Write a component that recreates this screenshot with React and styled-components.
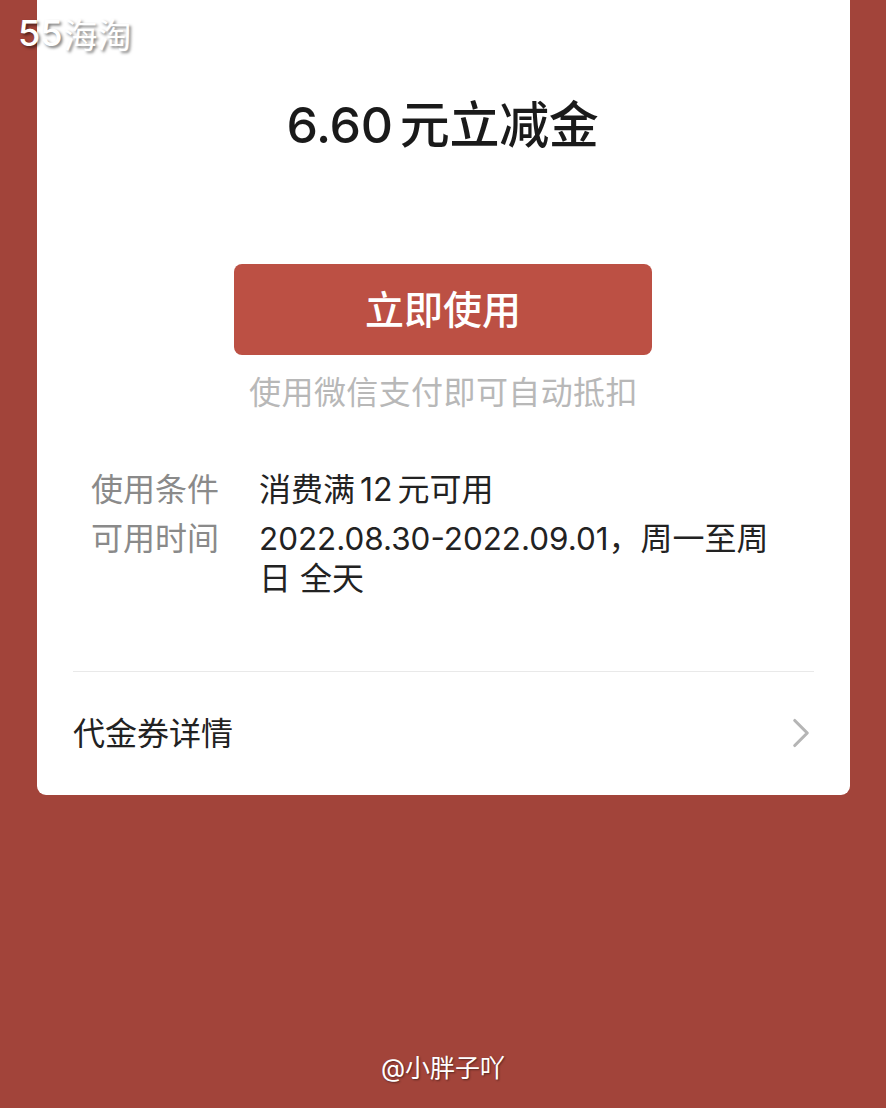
import React from 'react';
import styled, { createGlobalStyle } from 'styled-components';
import { ChevronRight } from 'lucide-react';

const GlobalStyle = createGlobalStyle`
    html, body {
        margin: 0;
        padding: 0;
        background-color: #a2443a;
    }
    body {
        font-family: Inter, "Noto Sans CJK SC", "Noto Sans", sans-serif;
    }
`;

const Page = styled.div`
    width: 886px;
    height: 1108px;
    position: relative;
    overflow: hidden;
    display: flex;
    flex-direction: column;
    align-items: center;
    background-color: #a2443a;
`;

const Watermark = styled.div`
    position: absolute;
    top: 10px;
    left: 18px;
    display: flex;
    align-items: center;
    height: 46px;
    font-size: 34px;
    color: #fff;
    text-shadow: 2px 2px 3px rgba(0, 0, 0, 0.5);
`;

const WatermarkDigits = styled.span`
    font-size: 36px;
    font-weight: 500;
    margin-right: 1px;
`;

const Card = styled.div`
    width: 813px;
    height: 795px;
    margin-left: 1px;
    box-sizing: border-box;
    padding: 92px 36px 0;
    background-color: #fff;
    border-radius: 0 0 9px 9px;
    display: flex;
    flex-direction: column;
    flex-shrink: 0;
`;

const Title = styled.h1`
    margin: 0;
    padding-right: 2px;
    text-align: center;
    font-size: 50px;
    line-height: 66px;
    font-weight: 500;
    letter-spacing: -0.3px;
    word-spacing: -6px;
    color: #1a1a1a;
`;

const UseButton = styled.div`
    width: 418px;
    height: 91px;
    margin: 106px 0 0 161px;
    padding-bottom: 5px;
    box-sizing: border-box;
    background-color: #bc5044;
    border-radius: 8px;
    color: #fff;
    font-size: 39px;
    font-weight: 500;
    display: flex;
    align-items: center;
    justify-content: center;
`;

const Hint = styled.div`
    margin-top: 14px;
    text-align: center;
    font-size: 32px;
    letter-spacing: 0.4px;
    line-height: 48px;
    color: #b8b8b8;
`;

const Conditions = styled.div`
    margin-top: 53px;
    padding-left: 18px;
    display: flex;
    flex-direction: column;
    gap: 10px;
`;

const Row = styled.div`
    display: flex;
`;

const Label = styled.div`
    width: 168px;
    flex-shrink: 0;
    font-size: 32px;
    line-height: 39px;
    color: #8a8a8a;
`;

const Value = styled.div`
    width: 520px;
    font-size: 32px;
    line-height: 39px;
    word-spacing: ${props => props.$tight ? '-4px' : '0'};
    color: #222;
`;

const DateRange = styled.span`
    font-size: 31.4px;
    white-space: nowrap;
`;

const Divider = styled.div`
    margin-top: 73px;
    height: 1px;
    background-color: #e9e9e9;
`;

const DetailRow = styled.div`
    height: 124px;
    display: flex;
    align-items: center;
    justify-content: space-between;
    font-size: 32px;
    color: #222;
    svg {
        color: #b5b5b5;
        margin-right: -12px;
    }
`;

const DetailLabel = styled.span`
    margin-top: -4px;
`;

const Signature = styled.div`
    margin-top: 254px;
    font-size: 25px;
    line-height: 38px;
    color: #fff;
    text-shadow: 1px 1px 2px rgba(0, 0, 0, 0.45);
`;

const App = () => {
    return <Page>
        <GlobalStyle />
        <Watermark><WatermarkDigits>55</WatermarkDigits>海淘</Watermark>
        <Card>
            <Title>6.60 元立减金</Title>
            <UseButton>立即使用</UseButton>
            <Hint>使用微信支付即可自动抵扣</Hint>
            <Conditions>
                <Row>
                    <Label>使用条件</Label>
                    <Value $tight>消费满 12 元可用</Value>
                </Row>
                <Row>
                    <Label>可用时间</Label>
                    <Value><DateRange>2022.08.30-2022.09.01</DateRange>，周一至周日 全天</Value>
                </Row>
            </Conditions>
            <Divider />
            <DetailRow>
                <DetailLabel>代金券详情</DetailLabel>
                <ChevronRight size={50} strokeWidth={1.5} />
            </DetailRow>
        </Card>
        <Signature>@小胖子吖</Signature>
    </Page>;
};

export default App;
